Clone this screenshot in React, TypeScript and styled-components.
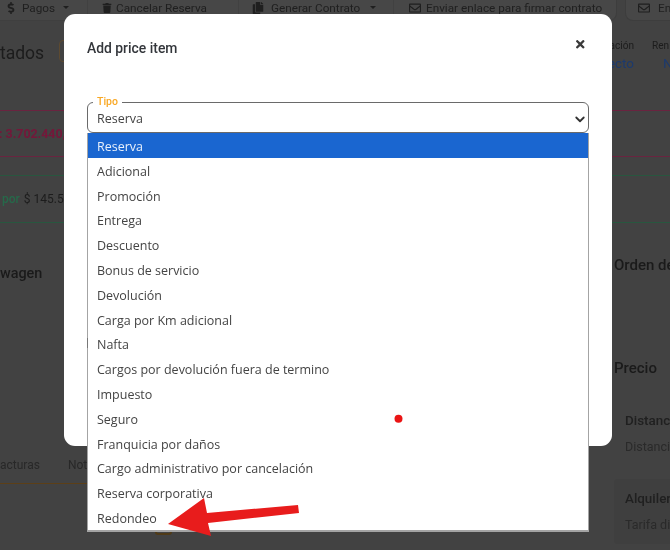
import React from "react";
import styled, { createGlobalStyle } from "styled-components";
import { FaDollarSign, FaTrash, FaCopy, FaRegEnvelope, FaTimes } from "react-icons/fa";

const Global = createGlobalStyle`
  html, body { margin: 0; padding: 0; background: #424242; }
  body { font-family: Roboto, "Liberation Sans", sans-serif; overflow: hidden; }
`;

const Shot = styled.div`
  position: relative;
  width: 670px;
  height: 550px;
  overflow: hidden;
  filter: blur(0.2px);
`;

const Page = styled.div`
  width: 670px;
  height: 550px;
  overflow: hidden;
  background: #424242;
  color: #1a1a1a;
  display: flex;
  flex-direction: column;
`;

const Toolbar = styled.div`
  height: 21px;
  display: flex;
  gap: 8px;
  flex-shrink: 0;
`;

const ToolGroup = styled.div`
  width: 617px;
  display: flex;
  background: #474747;
  border-radius: 0 0 8px 0;
  border-right: 1px solid #3d3d3d;
  border-bottom: 1px solid #3f3f3f;
  box-sizing: border-box;
`;

const ToolGhost = styled.div`
  flex: 1;
  display: flex;
  background: #474747;
  border-left: 1px solid #3d3d3d;
  border-bottom: 1px solid #3d3d3d;
  border-radius: 0 0 0 8px;
  padding-left: 12px;
  box-sizing: border-box;
  min-width: 0;
`;

const ToolButton = styled.div<{ $w?: number; $pad?: number; $gap?: number }>`
  ${(p) => (p.$w ? `width: ${p.$w}px;` : "flex: 1;")}
  box-sizing: border-box;
  padding-left: ${(p) => p.$pad ?? 0}px;
  height: 15px;
  display: flex;
  align-items: center;
  gap: ${(p) => p.$gap ?? 6}px;
  font-size: 11.76px;
  color: #1f1f1f;
  white-space: nowrap;
  border-right: 1px solid #414141;
  &:last-child { border-right: none; }
`;

const Caret = styled.span`
  width: 0;
  height: 0;
  margin-left: 3px;
  border-left: 3px solid transparent;
  border-right: 3px solid transparent;
  border-top: 3.5px solid #1f1f1f;
`;

const HeaderRow = styled.div`
  height: 89px;
  flex-shrink: 0;
  display: flex;
  justify-content: space-between;
  padding-top: 17px;
  box-sizing: border-box;
`;

const Title = styled.div`
  display: flex;
  align-items: flex-start;
  gap: 15px;
  font-size: 17.5px;
  line-height: 30px;
  color: #1c1c1c;
`;

const TitleBadge = styled.span`
  width: 12px;
  height: 22px;
  margin-top: 2px;
  border: 1px solid #5d4a30;
  border-radius: 4px;
  box-sizing: border-box;
`;

const StatGroup = styled.div`
  width: 100px;
  display: flex;
  justify-content: flex-end;
  gap: 18px;
`;

const Stat = styled.div<{ $left?: boolean }>`
  display: flex;
  flex-direction: column;
  align-items: ${(p) => (p.$left ? "flex-start" : "flex-end")};
  ${(p) => (p.$left ? "width: 18px;" : "")}
  font-size: 10.1px;
  line-height: 16px;
  color: #1c1c1c;
  white-space: nowrap;
`;

const StatValue = styled.span<{ $indent?: number }>`
  margin-left: ${(p) => p.$indent ?? 0}px;
  font-size: 13.44px;
  line-height: 20px;
  color: #1c3a6e;
`;

const Band = styled.div<{ $line: string; $h: number; $mt?: number; $color?: string }>`
  height: ${(p) => p.$h}px;
  margin-top: ${(p) => p.$mt ?? 0}px;
  flex-shrink: 0;
  box-sizing: border-box;
  border-top: 1px solid ${(p) => p.$line};
  border-bottom: 1px solid ${(p) => p.$line};
  display: flex;
  align-items: center;
  gap: 4px;
  font-size: 12px;
  color: ${(p) => p.$color ?? "#1c1c1c"};
`;

const Amount = styled.span`
  font-size: 12.4px;
  font-weight: 700;
  margin-left: -1px;
  margin-top: -1px;
`;

const GreenWord = styled.span`
  color: #26694a;
  font-weight: 500;
  margin-left: 2px;
`;

const Columns = styled.div`
  flex: 1;
  display: flex;
  justify-content: space-between;
  min-height: 0;
`;

const LeftCol = styled.div`
  width: 300px;
  display: flex;
  flex-direction: column;
`;

const RightCol = styled.div`
  width: 56px;
  padding-top: 32px;
  display: flex;
  flex-direction: column;
  overflow: hidden;
`;

const SectionTitle = styled.div<{ $mt?: number }>`
  font-size: 15px;
  font-weight: 500;
  line-height: 20px;
  margin-top: ${(p) => p.$mt ?? 0}px;
  color: #1a1a1a;
  white-space: nowrap;
`;

const WagenTitle = styled(SectionTitle)`
  font-size: 14.4px;
  margin-top: 41px;
`;

const Tabs = styled.div`
  width: 88px;
  height: 34px;
  margin-top: 166px;
  display: flex;
  gap: 28px;
  font-size: 12px;
  line-height: 30px;
  color: #282828;
  border-bottom: 1px solid #5c3f17;
  box-sizing: border-box;
  flex-shrink: 0;
`;

const HiddenBox = styled.div`
  width: 17px;
  height: 20px;
  margin: 31px 0 0 155px;
  border: 2px solid #4f3a17;
  border-radius: 3px;
  box-sizing: border-box;
`;

const PriceCard = styled.div<{ $bg?: boolean; $mt?: number }>`
  margin-top: ${(p) => p.$mt ?? 0}px;
  padding: ${(p) => (p.$bg ? "10px 0 10px 11px" : "0 0 0 11px")};
  background: ${(p) => (p.$bg ? "#3f3f3f" : "transparent")};
  border-radius: 4px 0 0 4px;
  white-space: nowrap;
`;

const CardTitle = styled.div`
  font-size: 13.4px;
  font-weight: 500;
  line-height: 20px;
  color: #202020;
`;

const CardText = styled.div`
  margin-top: 7px;
  font-size: 12.5px;
  line-height: 18px;
  color: #2a2a2a;
`;

const Modal = styled.div`
  position: absolute;
  left: 64px;
  top: 14px;
  width: 548px;
  height: 432px;
  box-sizing: border-box;
  padding: 24px 23px 0;
  background: #fff;
  border-radius: 11px;
  color: #333;
`;

const ModalHeader = styled.div`
  display: flex;
  justify-content: space-between;
  align-items: flex-start;
`;

const ModalTitle = styled.div`
  font-size: 13.9px;
  font-weight: 500;
  line-height: 20px;
  color: #33363b;
`;

const Close = styled.span`
  display: flex;
  margin: 0 3px 0 0;
  font-size: 12.5px;
  color: #3a3a3a;
`;

const Field = styled.div`
  position: relative;
  width: 502px;
  height: 31px;
  margin-top: 44px;
  box-sizing: border-box;
  border: 1px solid #6a6a6a;
  border-radius: 6px;
  display: flex;
  align-items: center;
  justify-content: space-between;
  padding: 2px 2px 0 9px;
  font-family: "Open Sans", Roboto, sans-serif;
  font-size: 12.5px;
  color: #444;
`;

const FieldLabel = styled.span`
  position: absolute;
  left: 5px;
  top: -7px;
  padding: 0 4px;
  background: #fff;
  font-family: Roboto, sans-serif;
  font-size: 10.5px;
  font-weight: 500;
  line-height: 12px;
  color: #f9a825;
`;

const Options = styled.div`
  position: absolute;
  left: -1px;
  top: 30px;
  width: 502px;
  height: 399px;
  box-sizing: border-box;
  background: #fff;
  border: 1px solid #a4a4a4;
  border-top: none;
  border-right-width: 1.5px;
  border-bottom-width: 2px;
`;

const Option = styled.div<{ $selected?: boolean }>`
  height: 24.8px;
  line-height: 28.5px;
  padding-left: 9px;
  font-family: "Open Sans", Roboto, sans-serif;
  font-size: 12.5px;
  white-space: nowrap;
  background: ${(p) => (p.$selected ? "#1a66d0" : "transparent")};
  color: ${(p) => (p.$selected ? "#e8f0fb" : "#444")};
`;

const Mark = styled.span`
  position: absolute;
  left: -1px;
  top: 205px;
  width: 1px;
  height: 10px;
  background: #777;
`;

const Annotations = styled.svg`
  position: absolute;
  left: 0;
  top: 0;
  width: 670px;
  height: 550px;
  pointer-events: none;
`;

const items = [
  "Reserva", "Adicional", "Promoción", "Entrega", "Descuento", "Bonus de servicio",
  "Devolución", "Carga por Km adicional", "Nafta", "Cargos por devolución fuera de termino",
  "Impuesto", "Seguro", "Franquicia por daños", "Cargo administrativo por cancelación",
  "Reserva corporativa", "Redondeo",
];

export default function App() {
  return (
    <Shot>
      <Global />
      <Page>
        <Toolbar>
          <ToolGroup>
            <ToolButton $w={88} $pad={5} $gap={5}><FaDollarSign size={12} /> Pagos <Caret /></ToolButton>
            <ToolButton $w={151} $pad={14} $gap={4}><FaTrash size={10} /> Cancelar Reserva</ToolButton>
            <ToolButton $w={155} $pad={13} $gap={7}><FaCopy size={12} /> Generar Contrato <Caret /></ToolButton>
            <ToolButton $pad={15} $gap={5}><FaRegEnvelope size={12} /> Enviar enlace para firmar contrato</ToolButton>
          </ToolGroup>
          <ToolGhost>
            <ToolButton $gap={8}><FaRegEnvelope size={12} /> En</ToolButton>
          </ToolGhost>
        </Toolbar>
        <HeaderRow>
          <Title>tados <TitleBadge /></Title>
          <StatGroup>
            <Stat>ación<StatValue>ecto</StatValue></Stat>
            <Stat $left>Ren<StatValue $indent={11}>N</StatValue></Stat>
          </StatGroup>
        </HeaderRow>
        <Band $line="#6a2440" $h={47} $color="#75173a">
          <Amount>: 3.702.440,</Amount>
        </Band>
        <Band $line="#28573f" $h={48} $mt={18}>
          <GreenWord>por</GreenWord> $ 145.5
        </Band>
        <Columns>
          <LeftCol>
            <WagenTitle>wagen</WagenTitle>
            <Tabs><span>acturas</span><span>Not</span></Tabs>
            <HiddenBox />
          </LeftCol>
          <RightCol>
            <SectionTitle>Orden de</SectionTitle>
            <SectionTitle $mt={83}>Precio</SectionTitle>
            <PriceCard $mt={33}>
              <CardTitle>Distancia</CardTitle>
              <CardText>Distancia</CardText>
            </PriceCard>
            <PriceCard $bg $mt={23}>
              <CardTitle>Alquiler</CardTitle>
              <CardText>Tarifa diaria</CardText>
            </PriceCard>
          </RightCol>
        </Columns>
      </Page>
      <Modal>
        <ModalHeader>
          <ModalTitle>Add price item</ModalTitle>
          <Close><FaTimes /></Close>
        </ModalHeader>
        <Field>
          <FieldLabel>Tipo</FieldLabel>
          Reserva
          <svg width="12" height="12" viewBox="0 0 16 16" fill="none" stroke="#333" strokeWidth="2.4" strokeLinecap="round" strokeLinejoin="round">
            <path d="M3 6l5 5 5-5" />
          </svg>
          <Options>
            <Mark />
            {items.map((t, i) => (
              <Option key={t} $selected={i === 0}>{t}</Option>
            ))}
          </Options>
        </Field>
      </Modal>
      <Annotations viewBox="0 0 670 550">
        <circle cx="398.5" cy="418.7" r="4" fill="#ea1414" />
        <path d="M168 524 L204 498 L207 513 L298 505 L299 513 L208 523 L211 536 Z" fill="#e81c1c" />
      </Annotations>
    </Shot>
  );
}
